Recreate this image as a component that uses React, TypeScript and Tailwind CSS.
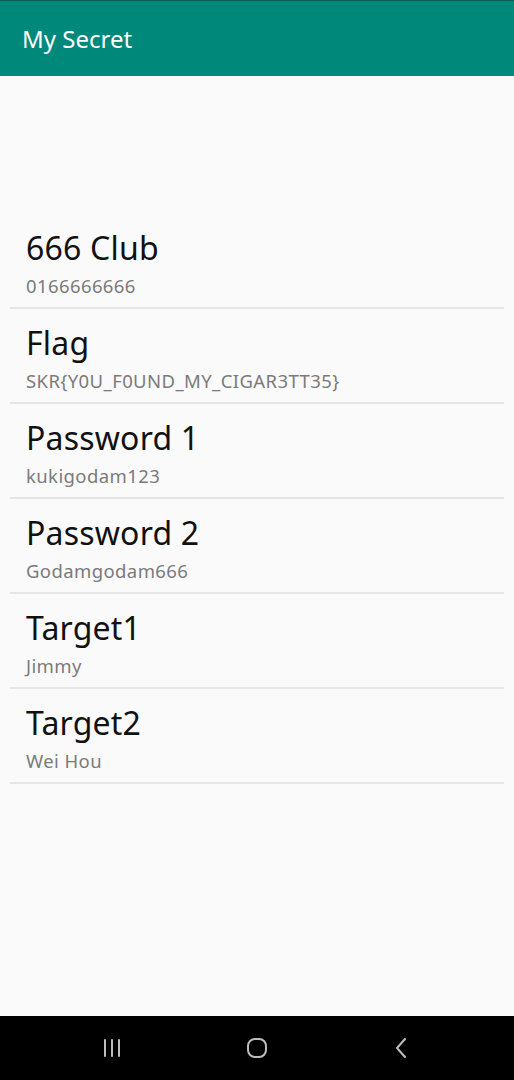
const items = [
  { title: "666 Club", value: "0166666666" },
  { title: "Flag", value: "SKR{Y0U_F0UND_MY_CIGAR3TT35}" },
  { title: "Password 1", value: "kukigodam123" },
  { title: "Password 2", value: "Godamgodam666" },
  { title: "Target1", value: "Jimmy" },
  { title: "Target2", value: "Wei Hou" },
];

export default function App() {
  return (
    <div className="w-[514px] h-[1080px] flex flex-col bg-[#fafafa] font-['Noto_Sans',Roboto,sans-serif]">
      <header className="h-[76px] shrink-0 bg-[#00897b] border-t border-[#0b5e55] flex items-center pl-[22px]">
        <h1 className="text-white text-[24px] leading-none">My Secret</h1>
      </header>

      <main className="flex-1 pt-[138px] px-[10px]">
        {items.map((item) => (
          <div key={item.title} className="border-b-2 border-[#e5e5e5] pl-[16px] pt-[15px] pb-[9px]">
            <div className="text-[32px] leading-[38px] text-[#111] tracking-[0.2px]">{item.title}</div>
            <div className="mt-[7px] text-[18.5px] leading-[24px] text-[#7a7a7a] tracking-[0.4px]">{item.value}</div>
          </div>
        ))}
      </main>

      <nav className="h-[64px] shrink-0 bg-black flex items-center justify-around px-[40px]">
        <svg width="24" height="24" viewBox="0 0 24 24" fill="none" stroke="#bdbdbd" strokeWidth="2" strokeLinecap="round">
          <path d="M5 4v16M12 4v16M19 4v16" />
        </svg>
        <svg width="24" height="24" viewBox="0 0 24 24" fill="none" stroke="#bdbdbd" strokeWidth="2">
          <rect x="3" y="3" width="18" height="18" rx="7" />
        </svg>
        <svg width="24" height="24" viewBox="0 0 24 24" fill="none" stroke="#bdbdbd" strokeWidth="2" strokeLinecap="round" strokeLinejoin="round">
          <path d="M15 3l-8 9 8 9" />
        </svg>
      </nav>
    </div>
  );
}
